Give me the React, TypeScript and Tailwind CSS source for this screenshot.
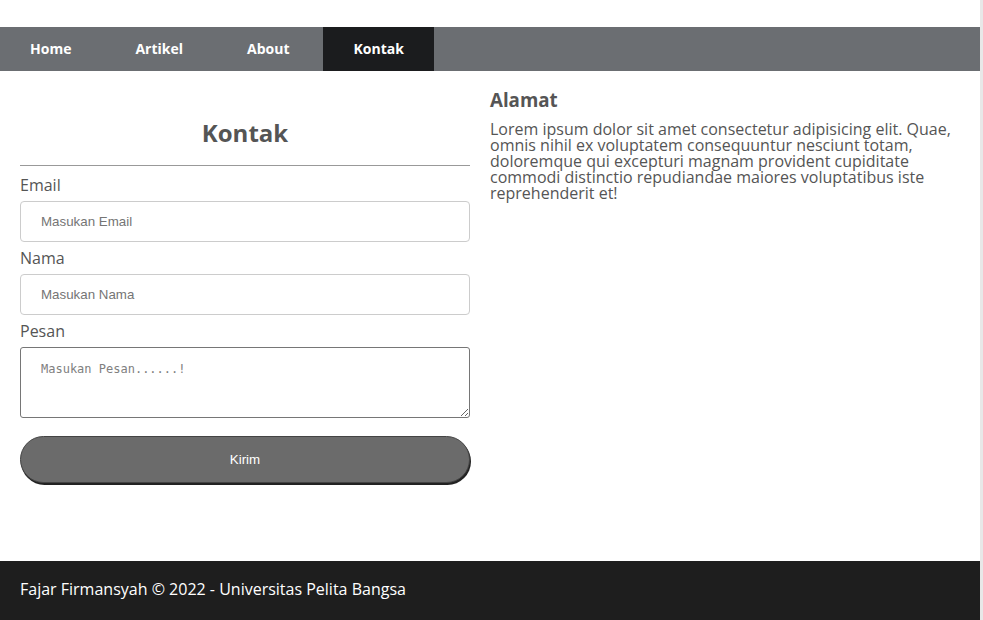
import React from "react";

const navItems = ["Home", "Artikel", "About", "Kontak"];

const App: React.FC = () => (
  <div className="flex w-[983px] h-[620px] overflow-hidden bg-white" style={{ fontFamily: '"Open Sans", sans-serif' }}>
    <div className="w-[980px] flex flex-col">
      <nav className="mt-[27px] h-[44px] bg-[#6b6e72] flex gap-[4px]">
        {navItems.map((item) => (
          <a
            key={item}
            className={`px-[30px] pb-[2px] flex items-center text-[14px] font-bold text-white ${item === "Kontak" ? "bg-[#1b1c1e]" : ""}`}
          >
            {item}
          </a>
        ))}
      </nav>

      <main className="flex gap-[20px] px-[20px] pb-[78px] text-[#555]">
        <section className="w-[450px] pt-[46px]">
          <h2 className="text-[24px] leading-[32px] font-bold text-center text-[#555]">Kontak</h2>
          <hr className="mt-[16px] border-t border-[#999]" />
          <form onSubmit={(e) => e.preventDefault()}>
            <label className="block mt-[9px] text-[16px] leading-[20px]">Email</label>
            <input
              placeholder="Masukan Email"
              className="mt-[6px] w-full h-[41px] px-[20px] border border-[#ccc] rounded-[4px] text-[13.33px] placeholder:text-[#757575] outline-none"
              style={{ fontFamily: '"Liberation Sans", Arial, sans-serif' }}
            />
            <label className="block mt-[6px] text-[16px] leading-[20px]">Nama</label>
            <input
              placeholder="Masukan Nama"
              className="mt-[6px] w-full h-[41px] px-[20px] border border-[#ccc] rounded-[4px] text-[13.33px] placeholder:text-[#757575] outline-none"
              style={{ fontFamily: '"Liberation Sans", Arial, sans-serif' }}
            />
            <label className="block mt-[6px] text-[16px] leading-[20px]">Pesan</label>
            <textarea
              placeholder="Masukan Pesan......!"
              className="mt-[6px] block w-full h-[71px] px-[20px] pt-[13px] border border-[#767676] rounded-[3px] text-[12px] leading-[16px] placeholder:text-[#808080] outline-none"
              style={{ fontFamily: '"DejaVu Sans Mono", monospace' }}
            />
            <button
              type="submit"
              className="mt-[18px] w-full h-[47px] rounded-full bg-[#6b6b6b] border border-[#444] shadow-[1px_2px_0_#222] text-white text-[13.33px]"
              style={{ fontFamily: '"Liberation Sans", Arial, sans-serif' }}
            >
              Kirim
            </button>
          </form>
        </section>

        <section className="flex-1 pt-[17px]">
          <h3 className="text-[18.72px] leading-[24px] font-bold text-[#555]">Alamat</h3>
          <p className="mt-[9px] text-[16px] leading-[16px] text-[#555]">
            Lorem ipsum dolor sit amet consectetur adipisicing elit. Quae, omnis nihil ex voluptatem consequuntur
            nesciunt totam, doloremque qui excepturi magnam provident cupiditate commodi distinctio repudiandae maiores
            voluptatibus iste reprehenderit et!
          </p>
        </section>
      </main>

      <footer className="bg-[#1e1e1e] text-white text-[16px] leading-[20px] px-[20px] py-[18px] flex-1">
        Fajar Firmansyah © 2022 - Universitas Pelita Bangsa
      </footer>
    </div>
    <div className="w-[3px] bg-[#e8e8e8]" />
  </div>
);

export default App;
